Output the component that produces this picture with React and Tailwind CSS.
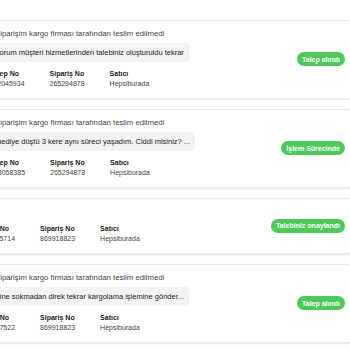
import React from "react";

const cards = [
  {
    title: "Siparişim kargo firması tarafından teslim edilmedi",
    message: "Forum müşteri hizmetlerinden talebiniz oluşturuldu tekrar",
    talep: "112045934",
    siparis: "265294878",
    satici: "Hepsiburada",
    status: "Talep alındı",
    shift: false,
  },
  {
    title: "Siparişim kargo firması tarafından teslim edilmedi",
    message: "mediye düştü 3 kere aynı süreci yaşadım. Ciddi misiniz? ...",
    talep: "108058385",
    siparis: "265294878",
    satici: "Hepsiburada",
    status: "İşlem Sürecinde",
    shift: false,
  },
  {
    title: "",
    message: "",
    talep: "105725714",
    siparis: "869918823",
    satici: "Hepsiburada",
    status: "Talebiniz onaylandı",
    shift: true,
  },
  {
    title: "Siparişim kargo firması tarafından teslim edilmedi",
    message: "Yine sokmadan direk tekrar kargolama işlemine gönder...",
    talep: "105727522",
    siparis: "869918823",
    satici: "Hepsiburada",
    status: "Talep alındı",
    shift: true,
  },
];

function Card({ c }) {
  return (
    <div className="flex items-center justify-between rounded-[4px] border border-[#ebebeb] bg-white pl-[21px] pr-[6px] pt-[8px] pb-[9px] shadow-[0_1px_2px_rgba(0,0,0,0.10)]">
      <div className="flex flex-col">
        <div className="h-[9px] whitespace-nowrap pl-[5px] text-[7.75px] leading-[9px] text-[#444]">
          {c.title}
        </div>
        {c.message ? (
          <div className="mt-[5px] w-fit whitespace-nowrap rounded-[3px] bg-[#f3f3f3] px-[5px] py-[5px] text-[7.5px] leading-[9px] text-[#1a1a1a]">
            {c.message}
          </div>
        ) : null}
        <div className={c.message ? "mt-[7px] flex gap-[25px]" : "mt-[8px] flex gap-[25px]"}>
          <div className={c.shift ? "-ml-[10px] flex flex-col" : "flex flex-col"}>
            <span className="text-[7px] font-bold leading-[10px] text-[#1a1a1a]">Talep No</span>
            <span className="text-[7px] leading-[10px] text-[#444]">{c.talep}</span>
          </div>
          <div className="flex flex-col">
            <span className="text-[7px] font-bold leading-[10px] text-[#1a1a1a]">Sipariş No</span>
            <span className="text-[7px] leading-[10px] text-[#444]">{c.siparis}</span>
          </div>
          <div className="flex flex-col">
            <span className="text-[7px] font-bold leading-[10px] text-[#1a1a1a]">Satıcı</span>
            <span className="text-[7px] leading-[10px] text-[#444]">{c.satici}</span>
          </div>
        </div>
      </div>
      <div className="flex h-[14px] items-center whitespace-nowrap rounded-full bg-[#4dc95b] px-[5px] text-[7px] font-bold leading-none text-white">
        {c.status}
      </div>
    </div>
  );
}

export default function App() {
  return (
    <div
      className="h-[350px] w-[350px] overflow-hidden bg-white"
      style={{ fontFamily: '"Liberation Sans", Arial, sans-serif' }}
    >
      <div className="-ml-[32px] flex w-[384px] flex-col gap-[10px] pt-[20px]">
        {cards.map((c, i) => (
          <Card key={i} c={c} />
        ))}
      </div>
    </div>
  );
}
